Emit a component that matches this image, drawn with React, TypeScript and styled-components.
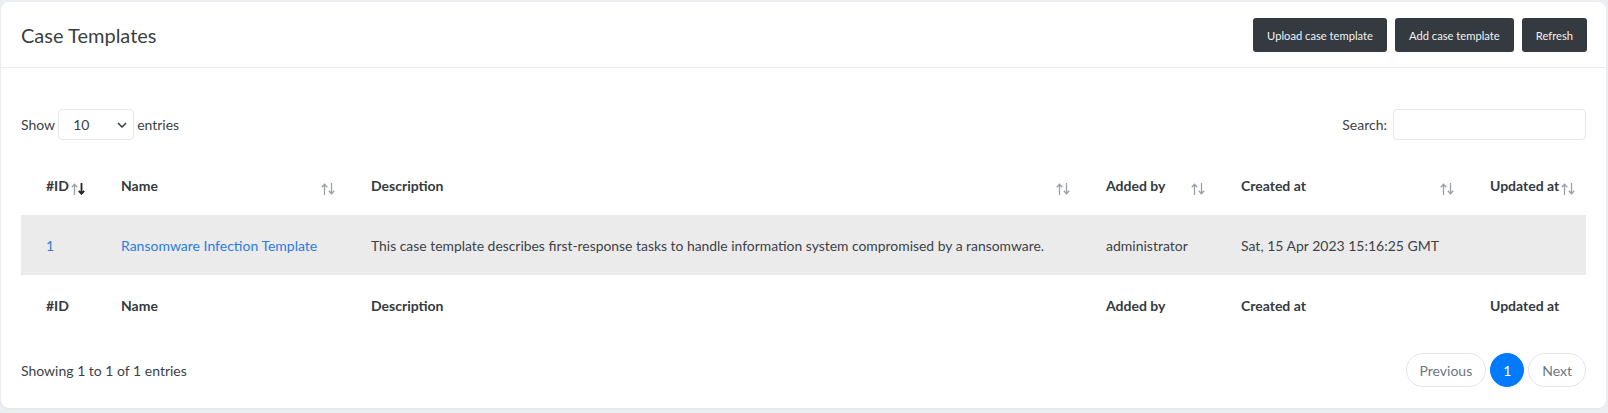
import React from "react";
import styled, { createGlobalStyle } from "styled-components";

const GlobalStyle = createGlobalStyle`
  * { box-sizing: border-box; }
  body {
    margin: 0;
    background: #eceef2;
    font-family: Lato, "Open Sans", sans-serif;
    color: #3d4247;
  }
`;

const Card = styled.div`
  margin: 2px 2px 5px 1px;
  width: 1605px;
  background: #fff;
  border-radius: 8px;
  box-shadow: 0 1px 2px rgba(0, 0, 0, 0.04);
`;

const CardHeader = styled.div`
  height: 66px;
  padding: 0 19px 0 20px;
  display: flex;
  align-items: center;
  justify-content: space-between;
  border-bottom: 1px solid #e9ebef;
`;

const Title = styled.h1`
  margin: 0;
  font-size: 20px;
  font-weight: 400;
  color: #3a3f44;
`;

const ButtonGroup = styled.div`
  display: flex;
  gap: 8px;
  padding-top: 1px;
`;

const DarkButton = styled.button`
  height: 34px;
  padding: 0 14px;
  border: none;
  border-radius: 3px;
  background: #343a40;
  color: #f1f3f5;
  font-family: Lato, sans-serif;
  font-size: 11.2px;
`;

const CardBody = styled.div`
  padding: 41px 20px 21px 20px;
`;

const Controls = styled.div`
  display: flex;
  justify-content: space-between;
  align-items: center;
  height: 31px;
`;

const ControlLabel = styled.label`
  display: flex;
  align-items: center;
  gap: 3px;
  font-size: 14px;
  color: #3d4247;
`;

const SelectBox = styled.div`
  width: 76px;
  height: 31px;
  border: 1px solid #e3e6ea;
  border-radius: 4px;
  display: flex;
  align-items: center;
  justify-content: space-between;
  padding: 0 6px 0 14px;
  font-size: 14px;
  color: #3d4247;
`;

const SearchInput = styled.input`
  width: 193px;
  height: 31px;
  margin-left: 3px;
  border: 1px solid #e3e6ea;
  border-radius: 4px;
  outline: none;
`;

const Table = styled.table`
  margin-top: 15px;
  width: 100%;
  table-layout: fixed;
  border-collapse: collapse;
  font-size: 14px;
`;

const Th = styled.th<{ $w: number }>`
  position: relative;
  width: ${(p) => p.$w}px;
  height: 60px;
  padding: 0 0 0 25px;
  text-align: left;
  font-weight: 700;
  color: #343a40;
  white-space: nowrap;
`;

const Td = styled.td`
  height: 60px;
  padding: 0 0 0 25px;
  white-space: nowrap;
  color: #3d4247;
`;

const StripedRow = styled.tr`
  background: #ebebeb;
`;

const Description = styled.span`
  font-size: 13.9px;
`;

const Link = styled.a`
  color: #2d7be0;
  text-decoration: none;
`;

const SortIcon = styled.svg`
  position: absolute;
  right: 10px;
  top: 28px;
`;

const Footer = styled.div`
  margin-top: 18px;
  display: flex;
  justify-content: space-between;
  align-items: center;
`;

const Info = styled.div`
  font-size: 14px;
  color: #3d4247;
`;

const Pager = styled.div`
  display: flex;
  gap: 4px;
`;

const PageButton = styled.button<{ $active?: boolean }>`
  height: 34px;
  min-width: 34px;
  padding: 0 ${(p) => (p.$active ? "0" : "13px")};
  border-radius: 17px;
  border: 1px solid ${(p) => (p.$active ? "#007bff" : "#e2e5e9")};
  background: ${(p) => (p.$active ? "#007bff" : "#fff")};
  color: ${(p) => (p.$active ? "#fff" : "#6b7785")};
  font-family: Lato, sans-serif;
  font-size: 14px;
`;

const Sort = ({ active }: { active?: boolean }) => (
  <SortIcon width="15" height="12" viewBox="0 0 15 12">
    <path d="M3.5 12V1.5M0.8 4.2L3.5 1.2L6.2 4.2" stroke="#9aa0a6" strokeWidth="1.3" fill="none" />
    <path
      d="M10.5 0V10.5M7.8 7.8L10.5 10.8L13.2 7.8"
      stroke={active ? "#212529" : "#9aa0a6"}
      strokeWidth={active ? 1.8 : 1.3}
      fill="none"
    />
  </SortIcon>
);

const columns = [
  { label: "#ID", w: 75 },
  { label: "Name", w: 250 },
  { label: "Description", w: 735 },
  { label: "Added by", w: 135 },
  { label: "Created at", w: 249 },
  { label: "Updated at", w: 121 },
];

export default function App() {
  return (
    <>
      <GlobalStyle />
      <Card>
        <CardHeader>
          <Title>Case Templates</Title>
          <ButtonGroup>
            <DarkButton>Upload case template</DarkButton>
            <DarkButton>Add case template</DarkButton>
            <DarkButton>Refresh</DarkButton>
          </ButtonGroup>
        </CardHeader>
        <CardBody>
          <Controls>
            <ControlLabel>
              Show
              <SelectBox>
                10
                <svg width="10" height="6" viewBox="0 0 10 6">
                  <path d="M1 1L5 5L9 1" stroke="#343a40" strokeWidth="1.5" fill="none" />
                </svg>
              </SelectBox>
              entries
            </ControlLabel>
            <ControlLabel>
              Search:
              <SearchInput />
            </ControlLabel>
          </Controls>
          <Table>
            <thead>
              <tr>
                {columns.map((c, i) => (
                  <Th key={c.label} $w={c.w}>
                    {c.label}
                    <Sort active={i === 0} />
                  </Th>
                ))}
              </tr>
            </thead>
            <tbody>
              <StripedRow>
                <Td>
                  <Link href="#">1</Link>
                </Td>
                <Td>
                  <Link href="#">Ransomware Infection Template</Link>
                </Td>
                <Td>
                  <Description>
                    This case template describes first-response tasks to handle information system compromised by a
                    ransomware.
                  </Description>
                </Td>
                <Td>administrator</Td>
                <Td>Sat, 15 Apr 2023 15:16:25 GMT</Td>
                <Td></Td>
              </StripedRow>
            </tbody>
            <tfoot>
              <tr>
                {columns.map((c) => (
                  <Th key={c.label} $w={c.w}>
                    {c.label}
                  </Th>
                ))}
              </tr>
            </tfoot>
          </Table>
          <Footer>
            <Info>Showing 1 to 1 of 1 entries</Info>
            <Pager>
              <PageButton>Previous</PageButton>
              <PageButton $active>1</PageButton>
              <PageButton>Next</PageButton>
            </Pager>
          </Footer>
        </CardBody>
      </Card>
    </>
  );
}
